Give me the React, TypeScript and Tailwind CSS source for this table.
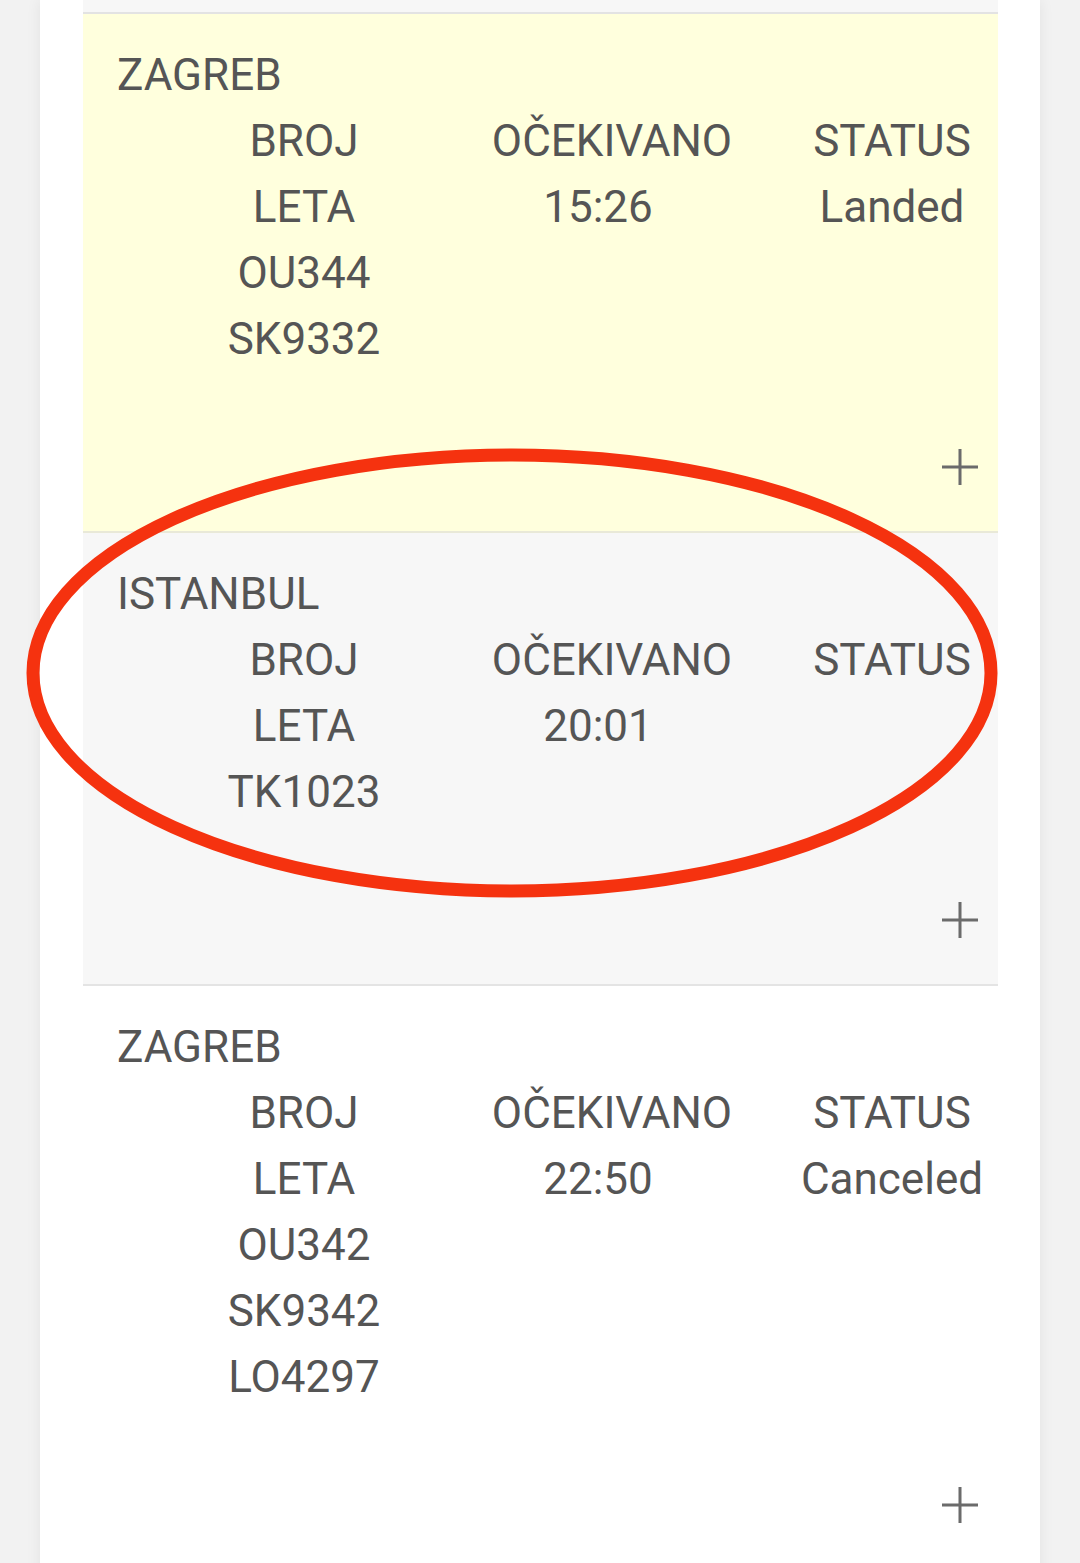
import React from 'react';

type Flight = {
  city: string;
  numbers: string[];
  expected: string;
  status: string;
  bg: string;
  border: string;
};

const flights: Flight[] = [
  {
    city: 'ZAGREB',
    numbers: ['OU344', 'SK9332'],
    expected: '15:26',
    status: 'Landed',
    bg: 'bg-[#ffffdd]',
    border: 'border-[#e9e9d8]',
  },
  {
    city: 'ISTANBUL',
    numbers: ['TK1023'],
    expected: '20:01',
    status: '',
    bg: 'bg-[#f7f7f7]',
    border: 'border-[#e4e4e4]',
  },
  {
    city: 'ZAGREB',
    numbers: ['OU342', 'SK9342', 'LO4297'],
    expected: '22:50',
    status: 'Canceled',
    bg: 'bg-white',
    border: 'border-[#e4e4e4]',
  },
];

function Plus() {
  return (
    <svg width="38" height="38" viewBox="0 0 38 38" className="text-[#6b6b6b]">
      <path d="M19 1v36M1 19h36" stroke="currentColor" strokeWidth="3" />
    </svg>
  );
}

function FlightCard({ f }: { f: Flight }) {
  return (
    <div className={`${f.bg} border-b-2 ${f.border} pt-[28px] pb-[31px] pl-[34px] pr-[19px]`}>
      <div className="h-[66px] leading-[66px]">{f.city}</div>
      <div className="grid grid-cols-[73px_228px_388px_172px] leading-[66px] whitespace-nowrap">
        <div />
        <div className="flex flex-col items-center">
          <div>BROJ</div>
          <div>LETA</div>
          {f.numbers.map((n) => (
            <div key={n}>{n}</div>
          ))}
        </div>
        <div className="flex flex-col items-center">
          <div>OČEKIVANO</div>
          <div className="pr-[28px]">{f.expected}</div>
        </div>
        <div className="flex flex-col items-center">
          <div>STATUS</div>
          {f.status && <div>{f.status}</div>}
        </div>
      </div>
      <div className="mt-[62px] h-[66px] flex items-center justify-end">
        <Plus />
      </div>
    </div>
  );
}

export default function App() {
  return (
    <div
      className="min-h-[1563px] bg-[#f2f2f2] flex justify-center overflow-hidden"
      style={{ fontFamily: 'Roboto, "Noto Sans", sans-serif' }}
    >
      <div className="relative w-[1000px] bg-white shadow-[0_0_14px_rgba(0,0,0,0.07)] pl-[43px] pr-[42px] pb-[60px]">
        <div className="h-[14px] bg-[#f7f7f7] border-b-2 border-[#e3e3e3]" />
        <div className="text-[44px] text-[#555555]">
          {flights.map((f, i) => (
            <FlightCard key={i} f={f} />
          ))}
        </div>
        <svg
          className="absolute left-[-40px] top-0 pointer-events-none overflow-visible"
          width="1080"
          height="1000"
          viewBox="0 0 1080 1000"
        >
          <ellipse cx="512" cy="673" rx="479" ry="218" fill="none" stroke="#f5320f" strokeWidth="13" />
        </svg>
      </div>
    </div>
  );
}
